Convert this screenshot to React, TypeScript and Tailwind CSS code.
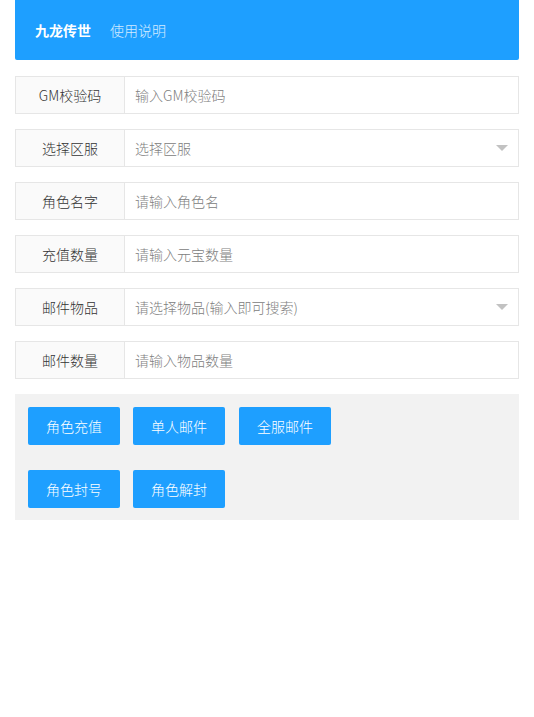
const fields = [
  { label: "GM校验码", placeholder: "输入GM校验码", select: false },
  { label: "选择区服", placeholder: "选择区服", select: true },
  { label: "角色名字", placeholder: "请输入角色名", select: false },
  { label: "充值数量", placeholder: "请输入元宝数量", select: false },
  { label: "邮件物品", placeholder: "请选择物品(输入即可搜索)", select: true },
  { label: "邮件数量", placeholder: "请输入物品数量", select: false },
];

const rows = [
  ["角色充值", "单人邮件", "全服邮件"],
  ["角色封号", "角色解封"],
];

export default function App() {
  return (
    <div
      className="min-h-[717px] bg-white px-[15px] text-sm font-light text-[#333]"
      style={{ fontFamily: '"Noto Sans CJK SC", "Noto Sans", sans-serif' }}
    >
      {/* Header */}
      <div className="flex h-[60px] items-center gap-[19px] rounded-b-[2px] bg-[#1E9FFF] px-[20px]">
        <span className="font-bold text-white">九龙传世</span>
        <span className="text-white/80">使用说明</span>
      </div>

      {/* Form */}
      <div className="mt-4 flex flex-col gap-[15px]">
        {fields.map((f) => (
          <div key={f.label} className="flex h-[38px] border border-[#e6e6e6]">
            <div className="flex w-[109px] shrink-0 items-center justify-center border-r border-[#e6e6e6] bg-[#FAFAFA] text-[#333]">
              {f.label}
            </div>
            <div className="relative flex flex-1 items-center pl-[10px] pr-[30px]">
              <input
                className="w-full bg-transparent text-sm font-light text-[#333] outline-none placeholder:text-[#808080]"
                placeholder={f.placeholder}
                readOnly={f.select}
              />
              {f.select && (
                <span className="absolute right-[10px] top-1/2 -mt-[3px] h-0 w-0 border-x-[6px] border-t-[6px] border-x-transparent border-t-[#c2c2c2]" />
              )}
            </div>
          </div>
        ))}
      </div>

      {/* Actions */}
      <div className="mt-[15px] flex flex-col gap-[25px] bg-[#f2f2f2] px-[13px] pb-[12px] pt-[13px]">
        {rows.map((row, i) => (
          <div key={i} className="flex gap-[13px]">
            {row.map((b, j) => (
              <button
                key={b}
                className={`h-[38px] w-[92px] rounded-[2px] bg-[#1E9FFF] text-sm font-light text-white ${j === 2 ? "ml-px" : ""}`}
              >
                {b}
              </button>
            ))}
          </div>
        ))}
      </div>
    </div>
  );
}
